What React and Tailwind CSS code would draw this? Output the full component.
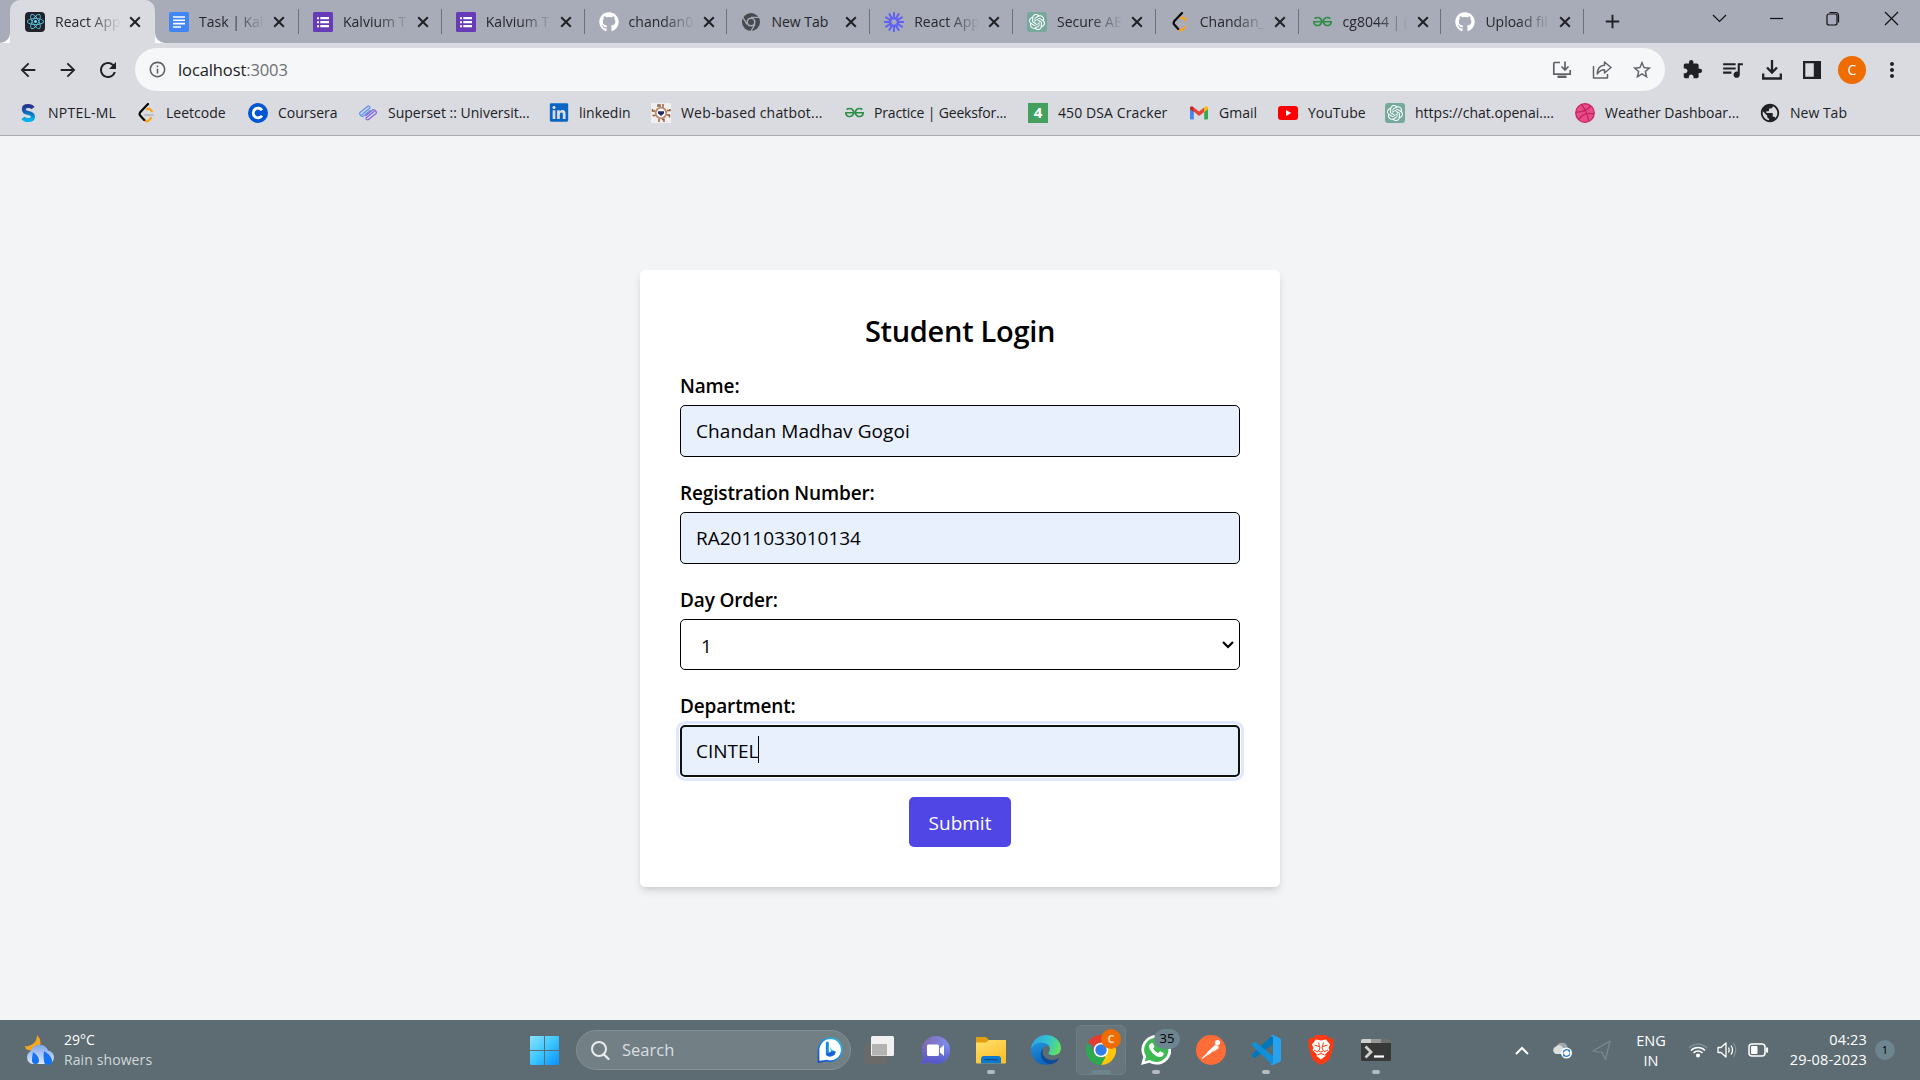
import React from "react";
import { FaGithub, FaLinkedin, FaReact } from "react-icons/fa";
import { SiGeeksforgeeks, SiOpenai } from "react-icons/si";
import {
  MdArrowBack, MdArrowForward, MdRefresh, MdInfoOutline, MdStarBorder,
  MdExtension, MdQueueMusic, MdMoreVert, MdAdd, MdPublic,
} from "react-icons/md";

function ReactIcon() {
  return (
    <span className="flex size-5 items-center justify-center rounded-sm bg-[#20232a] text-[#61dafb]">
      <FaReact size={17} />
    </span>
  );
}

function DocIcon() {
  return (
    <svg viewBox="0 0 20 20" className="size-5">
      <rect width="20" height="20" rx="2" fill="#4285f4" />
      <path d="M4 5h12M4 8.300h12M4 11.600h12M4 15h8" stroke="#fff" strokeWidth="1.600" />
    </svg>
  );
}

function FormIcon() {
  return (
    <svg viewBox="0 0 20 20" className="size-5">
      <rect width="20" height="20" rx="1.500" fill="#673ab7" />
      <path d="M7.300 6.200h8.700M7.300 10.200h8.700M7.300 14.200h8.700" stroke="#fff" strokeWidth="2.200" />
      <path d="M4 6.200h2M4 10.200h2M4 14.200h2" stroke="#fff" strokeWidth="2" />
    </svg>
  );
}

function GreyChrome() {
  return (
    <svg viewBox="0 0 20 20" className="size-5">
      <circle cx="10" cy="10" r="9" fill="#46494d" />
      <circle cx="10" cy="10" r="4.600" fill="#a8abb8" />
      <circle cx="10" cy="10" r="3" fill="#46494d" />
      <path d="M10 5.400h8.200M6 12.300 2 5.600M14 12.300l-4.200 7" stroke="#a8abb8" strokeWidth="1.300" />
    </svg>
  );
}

const RAYS = [0, 30, 60, 90, 120, 150, 180, 210, 240, 270, 300, 330];

function BurstIcon() {
  return (
    <svg viewBox="0 0 20 20" className="size-5">
      {RAYS.map((a) => (
        <path key={a} d="M10 .8v5.700" stroke="#6161f5" strokeWidth="2" strokeLinecap="round" transform={`rotate(${a} 10 10)`} />
      ))}
      <circle cx="10" cy="10" r="4.500" fill="none" stroke="#6161f5" strokeWidth="1.600" />
    </svg>
  );
}

function OpenAiTile() {
  return (
    <span className="flex size-5 items-center justify-center rounded-[3px] bg-[#75a99c] text-white">
      <SiOpenai size={16} />
    </span>
  );
}

function LeetIcon() {
  return (
    <svg viewBox="0 0 20 20" className="size-5">
      <path d="M11 6.300q1.700-1.300 3.200.2l1.600 1.600M8.200 16.600q2.300 3.200 5 .4l1.800-1.900" fill="none" stroke="#ffa116" strokeWidth="2.200" strokeLinecap="round" />
      <path d="M12 1 4.200 9.300q-1.200 1.600 0 3.200l4 4.400" fill="none" stroke="#070706" strokeWidth="2.200" strokeLinecap="round" />
      <path d="M9 12h8" stroke="#b3b3b3" strokeWidth="1.700" strokeLinecap="round" />
    </svg>
  );
}

function GfgIcon() {
  return <SiGeeksforgeeks size={19} className="text-[#2f8d46]" />;
}

function GitIcon() {
  return <FaGithub size={20} className="text-white" />;
}

function NptelIcon() {
  return (
    <svg viewBox="0 0 20 20" className="size-5">
      <defs>
        <linearGradient id="nptel" x1="0" y1="0" x2="0" y2="1">
          <stop offset="0" stopColor="#27348b" />
          <stop offset=".5" stopColor="#0a6fbf" />
          <stop offset="1" stopColor="#00b5ee" />
        </linearGradient>
      </defs>
      <path d="M15 5.200Q13.500 3 10.200 3 5.800 3 5.800 6.200T10.200 10q4.800.8 4.800 3.700Q15 17 10.200 17 6.500 17 5 14.800" fill="none" stroke="url(#nptel)" strokeWidth="4" />
    </svg>
  );
}

function CourseraIcon() {
  return (
    <svg viewBox="0 0 20 20" className="size-5">
      <circle cx="10" cy="10" r="10" fill="#0056d2" />
      <path d="M14 7.300A4.800 4.800 0 1 0 14 12.700" fill="none" stroke="#fff" strokeWidth="2.800" />
    </svg>
  );
}

function SupersetIcon() {
  return (
    <svg viewBox="0 0 20 20" className="size-5" fill="none" strokeWidth="1.200" strokeLinecap="round" strokeLinejoin="round">
      <path d="M9.500 3.500 2 9.500q-1 1 0 2l1.500 1.500q1 .8 2 0L12 7.500" stroke="#5a8ff0" />
      <path d="M12 5 4 11.500M9.500 3.500q1.500-.8 2.500.500" stroke="#5a8ff0" />
      <path d="M10.500 16.500 18 10.500q1-1 0-2L16.500 7q-1-.8-2 0L8 12.500" stroke="#7c62dc" />
      <path d="M8 15l8-6.500M10.500 16.500Q9 17.300 8 16" stroke="#7c62dc" />
    </svg>
  );
}

function ChatbotIcon() {
  return (
    <svg viewBox="0 0 20 20" className="size-5">
      <rect width="20" height="20" fill="#f1efee" />
      <circle cx="10" cy="10" r="5.300" fill="#fff" stroke="#bd8b6c" strokeWidth="1.800" />
      <path d="M7 8.200h6v2.300l-3 2.500-3-2.500z" fill="#292c61" />
      <path d="M7 4V2h2v2M12 1v3.500M8 16v3M11 16.500h2V19M4 8H1.500V6M1.500 12.500h3M16 7.500h3V6M16 12h2.500v2.500" fill="none" stroke="#8f5a3c" strokeWidth="1.400" />
    </svg>
  );
}

function FourIcon() {
  return (
    <span className="flex size-5 items-center justify-center bg-[#43a05f] text-[15px] font-bold text-white">4</span>
  );
}

function GmailIcon() {
  return (
    <svg viewBox="0 0 20 20" className="size-5">
      <path d="M1 5v10.200q0 1.300 1.300 1.300h2.500V8z" fill="#4285f4" />
      <path d="M19 5v10.200q0 1.300-1.300 1.300h-2.500V8z" fill="#34a853" />
      <path d="M4.800 8.500V4.400L10 8.400l5.200-4v4.600L10 13z" fill="#ea4335" />
      <path d="M1 5.300q0-2.500 2.500-1.900L4.800 4.400v4.700L1 6.300z" fill="#c5221f" />
      <path d="M19 5.300q0-2.500-2.500-1.900l-1.300 1v4.700L19 6.300z" fill="#fbbc04" />
    </svg>
  );
}

function YoutubeMark() {
  return (
    <svg viewBox="0 0 20 20" className="size-5">
      <rect y="3" width="20" height="14" rx="3" fill="#f00" />
      <path d="m8 7 5.200 3L8 13z" fill="#fff" />
    </svg>
  );
}

function DribbbleIcon() {
  return (
    <svg viewBox="0 0 20 20" className="size-5" fill="none">
      <circle cx="10" cy="10" r="9.300" fill="#ea4c89" stroke="#c32361" strokeWidth="1.200" />
      <path d="M6.500 1.700q5 6 7.200 16.200M1 9q9 .5 14.800-6M3.800 16.500Q9 8.500 19 11" stroke="#c32361" strokeWidth="1.300" />
    </svg>
  );
}

const TABS = [
  { title: "Task | Kalv", Icon: DocIcon },
  { title: "Kalvium T", Icon: FormIcon },
  { title: "Kalvium T", Icon: FormIcon },
  { title: "chandan0", Icon: GitIcon },
  { title: "New Tab", Icon: GreyChrome, whole: true },
  { title: "React App", Icon: BurstIcon },
  { title: "Secure AE", Icon: OpenAiTile },
  { title: "Chandan_", Icon: LeetIcon },
  { title: "cg8044 | (", Icon: GfgIcon },
  { title: "Upload fil", Icon: GitIcon },
];

const BOOKMARKS = [
  { label: "NPTEL-ML", Icon: NptelIcon, w: "w-[118px] tracking-[0.25px]" },
  { label: "Leetcode", Icon: LeetIcon, w: "w-[112px]" },
  { label: "Coursera", Icon: CourseraIcon, w: "w-[110px]" },
  { label: "Superset :: Universit...", Icon: SupersetIcon, w: "w-[191px]" },
  { label: "linkedin", Icon: () => <FaLinkedin size={21} className="text-[#0a66c2]" />, w: "w-[102px]" },
  { label: "Web-based chatbot...", Icon: ChatbotIcon, w: "w-[193px] tracking-[0.18px]" },
  { label: "Practice | Geeksfor...", Icon: GfgIcon, w: "w-[184px] tracking-[-0.18px]" },
  { label: "450 DSA Cracker", Icon: FourIcon, w: "w-[161px] tracking-[0.1px]" },
  { label: "Gmail", Icon: GmailIcon, w: "w-[89px]" },
  { label: "YouTube", Icon: YoutubeMark, w: "w-[107px]" },
  { label: "https://chat.openai....", Icon: OpenAiTile, w: "w-[190px]" },
  { label: "Weather Dashboar...", Icon: DribbbleIcon, w: "w-[185px]" },
  { label: "New Tab", Icon: () => <MdPublic size={22} className="-m-px text-[#202124]" />, w: "w-[110px]" },
];

function TabBody({ title, Icon, whole }) {
  return (
    <>
      <span className="flex size-5 shrink-0 items-center justify-center"><Icon /></span>
      <span
        className={
          whole
            ? "ml-[10px] w-[66px] whitespace-nowrap"
            : "ml-[10px] w-[66px] whitespace-nowrap [mask-image:linear-gradient(to_right,black_50%,transparent_100%)]"
        }
      >
        {title}
      </span>
      <span className="flex w-[28px] justify-center">
        <svg width="12" height="12" viewBox="0 0 12 12" stroke="#202124" strokeWidth="2"><path d="m1.200 1.200 9.600 9.600M10.800 1.200l-9.600 9.600" /></svg>
      </span>
    </>
  );
}

function WindowControls() {
  return (
    <svg width="200" height="36" viewBox="0 0 200 36" fill="none" stroke="#111" strokeWidth="1.200">
      <path d="m13 15 6.500 6.500L26 15" />
      <path d="M70 18.500h13" />
      <rect x="127" y="14" width="10" height="11" rx="2" />
      <path d="M129.500 12.500h6q3 0 3 3v7" />
      <path d="m185 12 13 13M198 12l-13 13" />
    </svg>
  );
}

function TabStrip() {
  return (
    <div className="flex h-[43px] text-[14px] text-[#25272b]">
      <div className="w-[10px] rounded-br-[10px] bg-[#a8abb8]" />
      <div className="bg-[#a8abb8]">
        <div className="flex h-full w-[145px] items-center rounded-t-[10px] bg-[#dadbe1] pl-[15px]">
          <TabBody title="React App" Icon={ReactIcon} />
        </div>
      </div>
      <div className="flex flex-1 items-center rounded-bl-[10px] bg-[#a8abb8]">
        {TABS.map((t, i) => (
          <div key={i} className={i === 0 ? "flex h-[25px] w-[144px] items-center border-r border-[#6d7079] pl-[14px]" : "flex h-[25px] w-[142.800px] items-center border-r border-[#6d7079] pl-[14px]"}>
            <TabBody {...t} />
          </div>
        ))}
        <span className="flex w-[56px] justify-center text-[#202124]"><MdAdd size={23} /></span>
        <div className="ml-auto mr-5 -mt-[7px]"><WindowControls /></div>
      </div>
    </div>
  );
}

function Slot({ children }) {
  return <span className="flex w-10 items-center justify-center">{children}</span>;
}

function Toolbar() {
  return (
    <div className="flex h-[53px] items-center bg-[#dadbe1] pl-2 pr-2 text-[#202124]">
      <Slot><MdArrowBack size={22} /></Slot>
      <Slot><MdArrowForward size={22} /></Slot>
      <Slot><MdRefresh size={24} /></Slot>
      <div className="ml-[7px] mr-[7px] flex h-[43px] flex-1 items-center rounded-full bg-[#f6f7f9] pl-[13px] pr-[3px]">
        <MdInfoOutline size={19} className="text-[#5f6368]" />
        <span className="ml-[11px] pt-px text-[16.500px] tracking-[-0.100px]">localhost<span className="text-[#6b6f75]">:3003</span></span>
        <div className="ml-auto flex text-[#5f6368]">
          <Slot>
            <svg width="20" height="20" viewBox="0 0 20 20" fill="none" stroke="currentColor" strokeWidth="1.700">
              <path d="M8 2.500H2.500q-.7 0-.7.700v11h16.400V10" />
              <path d="M13 1.500v8M9.500 6.500 13 10l3.500-3.500" />
              <path d="M5.500 15.500h9v2.500h-9z" fill="currentColor" stroke="none" />
            </svg>
          </Slot>
          <Slot>
            <svg width="20" height="20" viewBox="0 0 20 20" fill="none" stroke="currentColor" strokeWidth="1.500" strokeLinejoin="round">
              <path d="M1.500 6v12h14v-4" />
              <path d="M12.500 2 19 7.500 12.500 13V9.800Q8 9.800 5.200 14 5.500 5.500 12.500 5.200z" />
            </svg>
          </Slot>
          <Slot><MdStarBorder size={22} /></Slot>
        </div>
      </div>
      <Slot><MdExtension size={21} /></Slot>
      <Slot><MdQueueMusic size={25} /></Slot>
      <Slot>
        <svg width="20" height="20" viewBox="0 0 20 20" fill="none" stroke="currentColor" strokeWidth="2.300">
          <path d="M10 0v12M5 7.500l5 5 5-5M1.200 13.500v5h17.600v-5" />
        </svg>
      </Slot>
      <Slot>
        <svg width="18" height="18" viewBox="0 0 18 18">
          <path d="M0 0h18v18H0zM2.300 2.300v13.400h8.500V2.300z" fill="currentColor" fillRule="evenodd" />
        </svg>
      </Slot>
      <Slot>
        <span className="flex size-7 items-center justify-center rounded-full bg-[#ef6c00] text-[14px] text-white">C</span>
      </Slot>
      <Slot><MdMoreVert size={24} /></Slot>
    </div>
  );
}

function Bookmarks() {
  return (
    <div className="flex h-[40px] items-center border-b border-[#a9abb4] bg-[#dadbe1] pb-[6px] pl-[18px] text-[14px] text-[#202124]">
      {BOOKMARKS.map(({ label, Icon, w }) => (
        <div key={label} className={`flex shrink-0 items-center whitespace-nowrap ${w}`}>
          <span className="flex size-5 shrink-0 items-center justify-center"><Icon /></span>
          <span className="ml-[10px]">{label}</span>
        </div>
      ))}
    </div>
  );
}

function Label({ children }) {
  return <div className="text-[19px] font-semibold leading-[28px] tracking-[-0.150px] pb-[2px]">{children}</div>;
}

function LoginCard() {
  return (
    <div className="mt-[134px] h-[617px] w-[640px] rounded-[5px] bg-white px-10 pt-10 text-black shadow-[0_5px_8px_-1px_rgba(0,0,0,0.12),0_2px_5px_-2px_rgba(0,0,0,0.1)]">
      <h1 className="pt-px text-center text-[29px] font-semibold leading-[40px] tracking-[-0.300px]">Student Login</h1>
      <div className="mt-[19px] pt-[2px]">
        <Label>Name:</Label>
        <div className="mt-[3px] flex h-[52px] items-center rounded-[5px] border border-black bg-[#e8f0fe] pl-[15px] pt-px text-[19px] tracking-[0.080px]">Chandan Madhav Gogoi</div>
      </div>
      <div className="mt-[22px]">
        <Label>Registration Number:</Label>
        <div className="mt-[3px] flex h-[52px] items-center rounded-[5px] border border-black bg-[#e8f0fe] pl-[15px] pt-px text-[19px]">RA2011033010134</div>
      </div>
      <div className="mt-[22px]">
        <Label>Day Order:</Label>
        <div className="mt-[3px] flex h-[51px] items-center justify-between rounded-[5px] border border-black pl-5 pr-[5px] text-[19px]">
          <span className="pt-[3px]">1</span>
          <svg width="12" height="8" viewBox="0 0 12 8" fill="none" stroke="#000" strokeWidth="2.200"><path d="m1 1 5 5 5-5" /></svg>
        </div>
      </div>
      <div className="mt-[22px]">
        <Label>Department:</Label>
        <div className="mt-[3px] flex h-[52px] items-center rounded-[5px] border-2 border-[#101010] bg-[#e8f0fe] pl-[14px] text-[19px] shadow-[0_0_0_1px_#fff,0_0_0_4px_#e0e7ff]">
          <span className="pt-px">CINTEL</span>
          <span className="-ml-px mb-[3px] h-[27px] w-px bg-black" />
        </div>
      </div>
      <button className="mx-auto mt-5 flex h-[50px] w-[102px] items-center justify-center rounded-[5px] bg-[#4f46e5] pt-[2px] text-[19px] font-medium text-white">Submit</button>
    </div>
  );
}

function WeatherIcon() {
  return (
    <svg width="32" height="32" viewBox="0 0 32 32">
      <defs>
        <linearGradient id="cloud" x1="0" y1="0" x2="0" y2="1">
          <stop offset="0" stopColor="#7ba4ec" />
          <stop offset="1" stopColor="#dfe8fb" />
        </linearGradient>
      </defs>
      <path d="M13 1q5 5 3 11T4 16q-3-1-3-4 5 1 9-3 3-3 3-8z" fill="#f2a51e" />
      <path d="M8 30a7 7 0 0 1-1-13 9 9 0 0 1 17-.500A6.800 6.800 0 0 1 24 30z" fill="url(#cloud)" />
      <path d="M9 18q6 4 6 8.500a3.500 3.500 0 0 1-7 0Q8 23 9 18zM20 17q8 5 8 10a4 4 0 0 1-8 0q-1-5 0-10z" fill="#1473f3" />
    </svg>
  );
}

function WindowsIcon() {
  return (
    <svg width="29" height="29" viewBox="0 0 29 29">
      <defs>
        <linearGradient id="win" gradientUnits="userSpaceOnUse" x1="0" y1="0" x2="29" y2="29">
          <stop offset="0" stopColor="#8be3ff" />
          <stop offset=".5" stopColor="#3cc6ff" />
          <stop offset="1" stopColor="#0591fb" />
        </linearGradient>
      </defs>
      <path d="M1 0h13v14H0V1q0-1 1-1zM15 0h13q1 0 1 1v13H15zM0 15h14v14H1q-1 0-1-1zM15 15h14v13q0 1-1 1H15z" fill="url(#win)" />
    </svg>
  );
}

function BingIcon() {
  return (
    <svg width="26" height="26" viewBox="0 0 26 26">
      <defs>
        <linearGradient id="bing" x1="1" y1="0" x2="0" y2="1">
          <stop offset="0" stopColor="#27c4ee" />
          <stop offset="1" stopColor="#1b4fc0" />
        </linearGradient>
      </defs>
      <path d="M13.500 1.200a11.500 11.500 0 1 1-3.800 22.400L1.500 25V13A12 12 0 0 1 13.500 1.200z" fill="#fff" stroke="url(#bing)" strokeWidth="1.800" />
      <path d="M10.300 6v11" stroke="#178be0" strokeWidth="3" strokeLinecap="round" />
      <path d="m13 9.500 1.500 3 4 2q.3 3-3 4.500-3.700 1.700-6.500-.900l5-3.100z" fill="#22bce6" />
      <path d="m8.800 17 6-2.700 3.700.200q0 3-3.500 4.500-4.500 1.500-6.200-2z" fill="#1c5fd6" />
    </svg>
  );
}

function TaskViewIcon() {
  return (
    <svg width="30" height="28" viewBox="0 0 30 28">
      <rect y="8" width="23" height="20" rx="1.500" fill="#6a6a6a" />
      <rect x="7" width="23" height="20" rx="1.500" fill="#f1f1f1" />
      <rect x="8" y="8" width="15" height="11.500" fill="#b3b3b3" />
    </svg>
  );
}

function MeetIcon() {
  return (
    <svg width="29" height="28" viewBox="0 0 29 28">
      <defs>
        <linearGradient id="meet" x1="0" y1="0" x2="1" y2="0.300">
          <stop offset="0" stopColor="#8464a8" />
          <stop offset="1" stopColor="#7b8ff0" />
        </linearGradient>
        <linearGradient id="meetFade" x1="0" y1="0" x2="0" y2="1">
          <stop offset=".3" stopColor="#5558cc" stopOpacity="0" />
          <stop offset="1" stopColor="#5153c7" />
        </linearGradient>
      </defs>
      <path d="M15 0a14 14 0 1 1-6 26.600L0 28l2.400-7.500A14 14 0 0 1 15 0z" fill="url(#meet)" />
      <path d="M15 0a14 14 0 1 1-6 26.600L0 28l2.400-7.500A14 14 0 0 1 15 0z" fill="url(#meetFade)" />
      <rect x="6" y="8.500" width="12" height="11.500" rx="1.500" fill="#fff" />
      <path d="m19 12.500 4-3.500v11l-4-3.500z" fill="#fff" />
    </svg>
  );
}

function ExplorerIcon() {
  return (
    <svg width="30" height="27" viewBox="0 0 30 27">
      <defs>
        <linearGradient id="fold" x1="0" y1="0" x2="0.500" y2="1">
          <stop offset="0" stopColor="#ffdf6e" />
          <stop offset="1" stopColor="#fdc12c" />
        </linearGradient>
      </defs>
      <path d="M0 1q0-1 1-1h9l3 3h16q1 0 1 1v5H0z" fill="#dfa00f" />
      <path d="M0 5.500h10L13 3h17v22.500q0 1-1 1H1q-1 0-1-1z" fill="url(#fold)" />
      <path d="M5 26.500V22q0-3 3-3h14q3 0 3 3v4.500z" fill="#0c79cc" />
      <path d="M8.500 22.700h13" stroke="#0b4f8d" strokeWidth="1.200" />
    </svg>
  );
}

function EdgeIcon() {
  return (
    <svg width="30" height="30" viewBox="0 0 30 30">
      <defs>
        <linearGradient id="edgeTop" x1="0" y1="0.300" x2="1" y2="0.600">
          <stop offset="0" stopColor="#29a5e5" />
          <stop offset=".55" stopColor="#36c5c9" />
          <stop offset="1" stopColor="#65e35b" />
        </linearGradient>
        <linearGradient id="edgeSide" x1="0" y1="0" x2="0.300" y2="1">
          <stop offset="0" stopColor="#2493df" />
          <stop offset="1" stopColor="#0a67bd" />
        </linearGradient>
      </defs>
      <path d="M0 14A15 15 0 0 1 15 0c9 0 15 6.500 15 13 0 5-4 7.300-7.500 7.300-3.700 0-5-1.300-5-2.300 0-.800 1.500-1.500 1.500-4 0-3-3.500-6-8-6Q4 8 0 14z" fill="url(#edgeTop)" />
      <path d="M0 15Q2.500 7.500 10.500 7.500q5 0 7.500 3.500-7-1-7 6 0 8 9 12A15 15 0 0 1 0 15z" fill="url(#edgeSide)" />
      <path d="M12 13.500q-2 6 2.500 9.500 5.500 4 12.500.500 1.300-.600.700.500Q25 28.300 20 29.200 10 28 9.800 19q0-3.500 2.200-5.500z" fill="#0e4a97" />
    </svg>
  );
}

function ChromeIcon() {
  return (
    <svg width="30" height="30" viewBox="0 0 30 30">
      <path d="M15 15 2 7.500a15 15 0 0 1 26 0z" fill="#e33b2e" />
      <path d="M15 15h6.500L15 30A15 15 0 0 0 28 7.500H15z" fill="#fdc60a" />
      <path d="M2 7.500 8.500 18.800l6.500 3.200h4.600L15 30A15 15 0 0 1 2 7.500z" fill="#2da94f" />
      <circle cx="15" cy="15" r="7.300" fill="#fff" />
      <circle cx="15" cy="15" r="5.700" fill="#2f7de9" />
    </svg>
  );
}

function WhatsappIcon() {
  return (
    <svg width="30" height="30" viewBox="0 0 30 30">
      <path d="M15.300 0a14.800 14.800 0 1 1-7 27.700L0 30l2.300-8A14.800 14.800 0 0 1 15.300 0z" fill="#fff" />
      <path d="M15.300 2.700a12.100 12.100 0 1 1-6.500 22.300l-5 1.300 1.400-4.800A12.100 12.100 0 0 1 15.300 2.700z" fill="#3dbb52" />
      <path d="M10.800 8q.9-.4 1.300.5l1.200 2.700q.2.600-.3 1.200l-1 1.200q1.800 3.300 5.200 4.700l1.400-1.700q.500-.500 1.100-.2l2.600 1.300q.800.500.4 1.700-.8 2.300-3.200 2.500-4 .3-8-4-4-4.200-3.400-7.300.4-2 2.700-2.600z" fill="#fff" />
    </svg>
  );
}

function PostmanIcon() {
  return (
    <svg width="30" height="30" viewBox="0 0 30 30">
      <circle cx="15" cy="15" r="15" fill="#ff6c37" />
      <circle cx="21.500" cy="7.500" r="2.600" fill="#fff" />
      <path d="m19.500 10.500-7.500 7-1 2 2-.8 8-7z" fill="#fff" stroke="#fff" strokeWidth="1.500" />
      <path d="m12 18.500-6 5M21.500 10.500l.5 2.500-4.500 3" fill="none" stroke="#fff" strokeWidth="1.400" />
    </svg>
  );
}

function CodeIcon() {
  return (
    <svg width="30" height="30" viewBox="0 0 30 30">
      <path d="m22 0-3 2.500L1 19.500q-1 1 0 1.800l2 1.500q.700.500 1.500 0L22 9z" fill="#0077b9" />
      <path d="m22 30-3-2.500L1 10.500q-1-1 0-1.800l2-1.500q.700-.500 1.500 0L22 21z" fill="#1190d8" />
      <path d="m22 0 7 3.200q1 .500 1 1.500v20.600q0 1-1 1.500L22 30q-1.500.4-3-1.500 3 1 3-1.500V3q0-2.500-3-1.500Q20.500-.300 22 0z" fill="#27a2ee" />
    </svg>
  );
}

function BraveIcon() {
  return (
    <svg width="26" height="30" viewBox="0 0 26 30">
      <path d="M8 0h10l3 3 2.500-.500L26 6l-1 3 .7 2.500L22 23q-1 2.500-3.500 4L13 30l-5.500-3Q5 25.500 4 23L.300 11.500 1 9 0 6l2.500-3.500L5 3z" fill="#fb3a13" />
      <path d="m13 5.500 5-1 4 5-1.500 3.500 1 2-4.500 4.500.5 1.500L13 24.500 8.500 21l.500-1.500L4.500 15l1-2L4 9.500l4-5z" fill="#fff" />
      <path d="m6.500 10 4.500 1.500M19.500 10 15 11.500M10.500 7.500 12 13l-1.500 3 2.500 1 2.500-1-1.500-3 1.500-5.500M6 15l4 2M20 15l-4 2M9.500 20l3.500-1.500 3.500 1.500" fill="none" stroke="#fb3a13" strokeWidth="1" />
    </svg>
  );
}

function TerminalIcon() {
  return (
    <svg width="30" height="22" viewBox="0 0 30 22">
      <rect width="30" height="22" rx="1.500" fill="#383838" />
      <path d="M1.500 0H10v4H0V1.500Q0 0 1.500 0z" fill="#cfcfcf" />
      <path d="M10 0h10v4H10z" fill="#989898" />
      <path d="M20 0h8.500Q30 0 30 1.500V4H20z" fill="#6f6f6f" />
      <path d="m4.500 7.500 5.500 5.500-5.500 5.500" fill="none" stroke="#cfcfcf" strokeWidth="2.800" />
      <path d="M13 17.500h10" stroke="#fff" strokeWidth="2.200" />
    </svg>
  );
}

function TaskbarApp({ children, dot }) {
  return (
    <div className="relative flex h-[60px] w-[55px] items-center justify-center">
      {children}
      {dot && <span className="absolute bottom-[6px] h-1 w-2 rounded-full bg-[#b4babd]" />}
    </div>
  );
}

function Taskbar() {
  return (
    <div className="flex h-[60px] items-center bg-[#5c6c72] text-white">
      <div className="flex w-[517px] items-center pl-[24px]">
        <WeatherIcon />
        <div className="ml-2 text-[14px] leading-[20px]">
          <div>29°C</div>
          <div className="text-[#d3d8da] tracking-[0.100px]">Rain showers</div>
        </div>
      </div>
      <TaskbarApp><WindowsIcon /></TaskbarApp>
      <div className="ml-1 flex h-10 w-[275px] items-center rounded-full border border-[#839095] bg-[#728086] pl-[14px] pr-[7px]">
        <svg width="19" height="19" viewBox="0 0 19 19" fill="none" stroke="#e9eced" strokeWidth="2">
          <circle cx="8" cy="8" r="7" />
          <path d="m12.500 13 5 5" strokeWidth="2.300" strokeLinecap="round" />
        </svg>
        <span className="ml-[12px] pt-px text-[16.500px] text-[#d9dee0]">Search</span>
        <span className="ml-auto"><BingIcon /></span>
      </div>
      <TaskbarApp><TaskViewIcon /></TaskbarApp>
      <div className="w-[2px]" />
      <TaskbarApp><MeetIcon /></TaskbarApp>
      <TaskbarApp dot><ExplorerIcon /></TaskbarApp>
      <TaskbarApp><EdgeIcon /></TaskbarApp>
      <div className="relative flex h-[60px] w-[55px] items-center justify-center">
        <div className="flex size-[50px] items-center justify-center rounded-[5px] border border-[#6f7e83] bg-[#66767c]"><ChromeIcon /></div>
        <span className="absolute left-[28px] top-[9px] flex size-5 items-center justify-center rounded-full bg-[#ef6c00] text-[11px] font-bold text-[#ffd9b8]">C</span>
        <span className="absolute bottom-[6px] h-1 w-5 rounded-full bg-[#6d858f]" />
      </div>
      <TaskbarApp dot>
        <WhatsappIcon />
        <span className="absolute left-[26px] top-[9px] flex h-5 w-[26px] items-center justify-center rounded-full bg-[#6d858f] text-[13px] text-black">35</span>
      </TaskbarApp>
      <TaskbarApp><PostmanIcon /></TaskbarApp>
      <TaskbarApp dot><CodeIcon /></TaskbarApp>
      <TaskbarApp><BraveIcon /></TaskbarApp>
      <TaskbarApp dot><TerminalIcon /></TaskbarApp>

      <div className="ml-auto flex items-center pr-[25px] text-[14px]">
        <svg width="14" height="9" viewBox="0 0 14 9" fill="none" stroke="#fff" strokeWidth="2"><path d="m1 8 6-6 6 6" /></svg>
        <svg className="ml-[23px]" width="20" height="18" viewBox="0 0 20 18">
          <path d="M5 5a5.500 5.500 0 0 1 10.500 1.500L18 11H9z" fill="#a0a7aa" />
          <path d="M3.500 13A4 4 0 0 1 4 5.500Q8 2 11 7l6 4v2z" fill="#dcdfe0" />
          <circle cx="14.500" cy="12" r="5.500" fill="#fff" />
          <path d="M11.200 11.500a3.300 3.300 0 0 1 6-1.300V8.500M17.800 12.500a3.300 3.300 0 0 1-6 1.300v1.700" fill="none" stroke="#1876d2" strokeWidth="1.300" />
        </svg>
        <svg className="ml-[20px]" width="19" height="20" viewBox="0 0 19 20" fill="none" stroke="#7b8b92" strokeWidth="1.200" strokeLinejoin="round">
          <path d="M18 1 1 11l9 1.500 3.500 7z" />
        </svg>
        <div className="ml-[23px] w-[34px] text-center text-[14.500px] leading-[20px] pt-px">
          <div>ENG</div>
          <div>IN</div>
        </div>
        <svg className="ml-[20px]" width="20" height="16" viewBox="0 0 20 16" fill="none" stroke="#fff" strokeWidth="1.500">
          <path d="M1 6a12.500 12.500 0 0 1 18 0" stroke="#829096" />
          <path d="M3 8.500a9.700 9.700 0 0 1 14 0M5.500 11a6.300 6.300 0 0 1 9 0" />
          <circle cx="10" cy="13.500" r="1.300" fill="#fff" />
        </svg>
        <svg className="ml-[9px]" width="21" height="18" viewBox="0 0 21 18" fill="none" stroke="#fff" strokeWidth="1.300" strokeLinejoin="round">
          <path d="M1 6.500h3L9 2v14l-5-4.500H1z" />
          <path d="M11.500 6.500q1.500 2.500 0 5M14 4.500q3 4.500 0 9" />
          <path d="M16.500 2q4.500 7 0 14" stroke="#829096" />
        </svg>
        <svg className="ml-[10px]" width="21" height="14" viewBox="0 0 21 14" fill="none" stroke="#fff" strokeWidth="1.500">
          <rect x="1" y="1" width="16" height="12" rx="3" />
          <rect x="3" y="3" width="6.500" height="8" rx="1" fill="#fff" stroke="none" />
          <path d="M19 4.500v5" strokeWidth="2.200" />
        </svg>
        <div className="ml-[16px] w-[82px] text-right text-[14.500px] leading-[20px] tracking-[0.150px]">
          <div>04:23</div>
          <div>29-08-2023</div>
        </div>
        <span className="ml-[8px] flex size-5 items-center justify-center rounded-full bg-[#6d858f] text-[11px] text-black">1</span>
      </div>
    </div>
  );
}

export default function App() {
  return (
    <div className="flex h-[1080px] w-[1920px] flex-col overflow-hidden font-['Open_Sans','Noto_Sans',sans-serif]">
      <TabStrip />
      <Toolbar />
      <Bookmarks />
      <main className="flex flex-1 justify-center bg-[#f3f4f6]">
        <LoginCard />
      </main>
      <Taskbar />
    </div>
  );
}
